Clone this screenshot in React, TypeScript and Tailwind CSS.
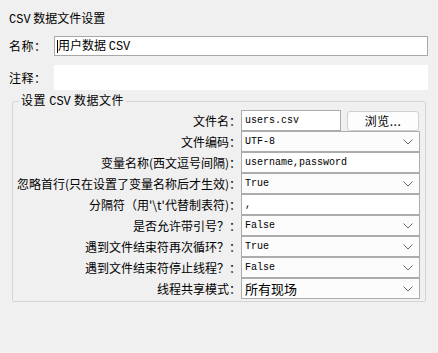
const cjk = "font-['Noto_Sans_CJK_SC',sans-serif]";
const mono = "font-['Liberation_Mono',monospace]";

type Row = {
  label: string;
  kind: "file" | "text" | "select";
  value: string;
  cjkValue?: boolean;
};

const rows: Row[] = [
  { label: "文件名：", kind: "file", value: "users.csv" },
  { label: "文件编码：", kind: "select", value: "UTF-8" },
  { label: "变量名称(西文逗号间隔)：", kind: "text", value: "username,password" },
  { label: "忽略首行(只在设置了变量名称后才生效)：", kind: "select", value: "True" },
  { label: "分隔符（用'\\t'代替制表符)：", kind: "text", value: "," },
  { label: "是否允许带引号？：", kind: "select", value: "False" },
  { label: "遇到文件结束符再次循环？：", kind: "select", value: "True" },
  { label: "遇到文件结束符停止线程？：", kind: "select", value: "False" },
  { label: "线程共享模式：", kind: "select", value: "所有现场", cjkValue: true },
];

function Chevron() {
  return (
    <svg width="10" height="6" viewBox="0 0 10 6" className="shrink-0">
      <path d="M0.5 0.5 L5 5 L9.5 0.5" fill="none" stroke="#6b6b6b" strokeWidth="1" />
    </svg>
  );
}

function Value({ row }: { row: Row }) {
  return (
    <span
      className={
        row.cjkValue
          ? `${cjk} text-[13px] text-black`
          : `${mono} text-[10px] font-medium text-black`
      }
    >
      {row.value}
    </span>
  );
}

function Field({ row }: { row: Row }) {
  if (row.kind === "file") {
    return (
      <div className="flex items-center h-full">
        <div className="w-[100px] h-full bg-white border border-[#acacac] flex items-center px-[3px]">
          <Value row={row} />
        </div>
        <button
          className={`${cjk} ml-[6px] w-[72px] h-[20px] rounded-[3px] border border-[#d0d0d0] bg-[#fdfdfd] text-[12px] tracking-[0.5px] text-black flex items-center justify-center`}
        >
          浏览...
        </button>
      </div>
    );
  }
  if (row.kind === "text") {
    return (
      <div className="w-[179px] h-full bg-white border border-[#acacac] flex items-center px-[3px]">
        <Value row={row} />
      </div>
    );
  }
  return (
    <div className="w-[179px] h-full bg-[#fcfcfc] border border-[#acacac] flex items-center justify-between pl-[3px] pr-[6px]">
      <Value row={row} />
      <Chevron />
    </div>
  );
}

export default function App() {
  return (
    <div className={`${cjk} w-[438px] h-[353px] bg-[#f0f0f0] text-black overflow-hidden`}>
      <div className="pt-[10px] pl-[9px] text-[12px] leading-[16px]">
        <span className={`${mono} text-[12px]`}>CSV</span> 数据文件设置
      </div>

      <div className="flex items-center mt-[8px] pl-[9px]">
        <span className="w-[45px] text-[12px] tracking-[0.5px]">名称：</span>
        <div className="w-[374px] h-[20px] bg-white border border-[#a8a8a8] flex items-center pl-[2px]">
          <span className="w-px h-[13px] bg-black" />
          <span className="text-[12px] leading-none">
            用户数据 <span className={`${mono} text-[12px]`}>CSV</span>
          </span>
        </div>
      </div>

      <div className="flex items-center mt-[9px] pl-[9px]">
        <span className="w-[45px] text-[12px] tracking-[0.5px]">注释：</span>
        <div className="w-[374px] h-[25px] bg-white" />
      </div>

      <fieldset className="ml-[12px] mt-[2px] w-[414px] border border-[#d5d5d5] rounded-[2px] pt-0 pb-[2px] pr-[5px]">
        <legend className="ml-[6px] px-[2px] text-[12px] leading-[16px] tracking-[0.5px]">
          设置 <span className={`${mono} text-[12px] tracking-normal`}>CSV</span> 数据文件
        </legend>
        <div className="flex flex-col">
          {rows.map((row) => (
            <div key={row.label} className="flex items-stretch h-[21px]">
              <div className="w-[228px] shrink-0 flex items-center justify-end text-[12px] whitespace-nowrap">
                {row.label}
              </div>
              <Field row={row} />
            </div>
          ))}
        </div>
      </fieldset>
    </div>
  );
}
